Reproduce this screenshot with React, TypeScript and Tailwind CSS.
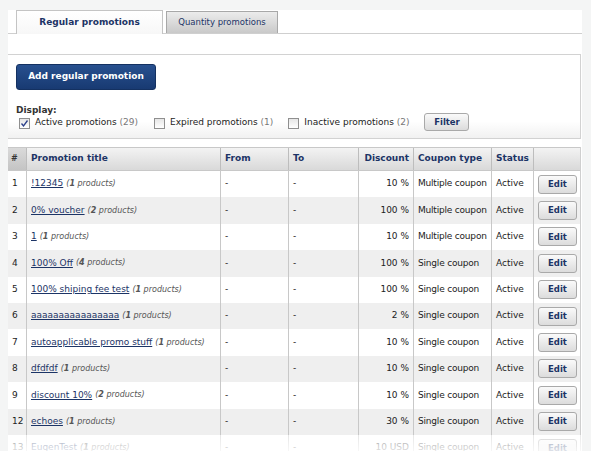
import React from "react";

const rows = [
  { n: "1", t: "!12345", p: "1", d: "10 %", c: "Multiple coupon" },
  { n: "2", t: "0% voucher", p: "2", d: "100 %", c: "Multiple coupon" },
  { n: "3", t: "1", p: "1", d: "10 %", c: "Multiple coupon" },
  { n: "4", t: "100% Off", p: "4", d: "100 %", c: "Single coupon" },
  { n: "5", t: "100% shiping fee test", p: "1", d: "100 %", c: "Single coupon" },
  { n: "6", t: "aaaaaaaaaaaaaaaa", p: "1", d: "2 %", c: "Single coupon" },
  { n: "7", t: "autoapplicable promo stuff", p: "1", d: "10 %", c: "Single coupon" },
  { n: "8", t: "dfdfdf", p: "1", d: "10 %", c: "Single coupon" },
  { n: "9", t: "discount 10%", p: "2", d: "10 %", c: "Single coupon" },
  { n: "12", t: "echoes", p: "1", d: "30 %", c: "Single coupon" },
  { n: "13", t: "EugenTest", p: "1", d: "10 USD", c: "Single coupon" },
];

function Check({ checked }: { checked?: boolean }) {
  return (
    <span className="inline-flex w-[11px] h-[11px] border border-[#8f8f8f] bg-gradient-to-b from-[#e6e6e6] to-[#ffffff] items-center justify-center mr-[5px]">
      {checked && (
        <svg width="9" height="9" viewBox="0 0 9 9">
          <path d="M1.5 4.5 L3.5 7 L7.5 1.5" fill="none" stroke="#2a3f8a" strokeWidth="1.3" />
        </svg>
      )}
    </span>
  );
}

export default function App() {
  const cols = "grid grid-cols-[19px_194px_68px_70px_55px_78px_42px_47px]";
  return (
    <div className="min-h-screen bg-[#f4f5f5] pt-[10px] pl-[8px] pr-[9px] text-[9px] text-[#222]" style={{ fontFamily: '"DejaVu Sans", Verdana, sans-serif' }}>
      <div className="bg-white relative h-[441px] overflow-hidden">
        {/* tabs */}
        <div className="flex items-end h-[24px] pl-[8px] border-b border-[#cfcfcf]">
          <div className="w-[147px] h-[24px] -mb-px border border-b-0 border-[#c4c4c4] bg-gradient-to-b from-white to-[#f7f7f7] flex items-center justify-center font-bold text-[#1c3466] text-[9px] pt-[1px]">
            Regular promotions
          </div>
          <div className="ml-[3px] w-[112px] h-[22px] border border-b-0 border-[#a8a8a8] bg-gradient-to-b from-[#ececec] to-[#c9c9c9] flex items-center justify-center text-[#1c3466] text-[8.5px]">
            Quantity promotions
          </div>
        </div>
        <div className="h-[20px]" />
        {/* filter box */}
        <div className="border border-l-0 border-[#d2d2d2] h-[85px] mr-[1px] bg-gradient-to-b from-white from-80% to-[#f1f1f1] pl-[8px] pt-[9px]">
          <button className="w-[140px] h-[26px] rounded-[3px] bg-gradient-to-b from-[#28508f] to-[#183a72] border border-[#143161] text-white font-bold text-[9px] flex items-center justify-center">
            Add regular promotion
          </button>
          <div className="mt-[15px] font-bold text-[#333] text-[9px] leading-[11px]">Display:</div>
          <div className="flex items-center pl-[3px] h-[14px]">
            <Check checked />
            <span>Active promotions <span className="text-[#777]">(29)</span></span>
            <span className="ml-[16px]" />
            <Check />
            <span>Expired promotions <span className="text-[#777]">(1)</span></span>
            <span className="ml-[15px]" />
            <Check />
            <span>Inactive promotions <span className="text-[#777]">(2)</span></span>
            <button className="ml-[15px] w-[45px] h-[18px] -mt-[2px] rounded-[3px] border border-[#a9a9a9] bg-gradient-to-b from-[#fafafa] to-[#dcdcdc] text-[#1c3466] font-bold text-[8.5px] flex items-center justify-center">
              Filter
            </button>
          </div>
        </div>
        <div className="h-[8px]" />
        {/* table */}
        <div className="mr-[1px] border-r border-[#cfcfcf]">
          <div className={`${cols} h-[24px] border-t border-b border-[#c8c8c8] font-bold text-[#1c3466] bg-gradient-to-b from-[#f3f3f3] to-[#d9d9d9]`}>
            <div className="flex items-center pl-[3px] bg-gradient-to-b from-[#dadada] to-[#c4c4c4] text-[#333] border-r border-[#bdbdbd] text-[8px]">#</div>
            <div className="flex items-center pl-[4px] border-r border-[#bdbdbd]">Promotion title</div>
            <div className="flex items-center pl-[4px] border-r border-[#bdbdbd]">From</div>
            <div className="flex items-center pl-[4px] border-r border-[#bdbdbd]">To</div>
            <div className="flex items-center justify-end pr-[4px] border-r border-[#bdbdbd]">Discount</div>
            <div className="flex items-center pl-[4px] border-r border-[#bdbdbd]">Coupon type</div>
            <div className="flex items-center pl-[4px] border-r border-[#bdbdbd]">Status</div>
            <div />
          </div>
          {rows.map((r, i) => (
            <div key={r.n} className={`${cols} h-[26.4px] ${i % 2 === 1 ? "bg-[#efefef]" : "bg-white"}`}>
              <div className="flex items-center pl-[4px] border-r border-[#c8c8c8]">{r.n}</div>
              <div className="flex items-center pl-[4px] border-r border-[#c8c8c8] whitespace-nowrap">
                <span className="underline text-[#1c3466]">{r.t}</span>
                <span className="ml-[3px] italic text-[#555] text-[8px]">
                  (<b>{r.p}</b> products)
                </span>
              </div>
              <div className="flex items-center pl-[4px] border-r border-[#c8c8c8]">-</div>
              <div className="flex items-center pl-[4px] border-r border-[#c8c8c8]">-</div>
              <div className="flex items-center justify-end pr-[4px] border-r border-[#c8c8c8]">{r.d}</div>
              <div className="flex items-center pl-[4px] border-r border-[#c8c8c8] whitespace-nowrap tracking-[-0.2px]">{r.c}</div>
              <div className="flex items-center pl-[4px] border-r border-[#c8c8c8]">Active</div>
              <div className="flex items-center justify-center">
                <button className="w-[39px] h-[19px] rounded-[3px] border border-[#a9a9a9] bg-gradient-to-b from-[#fafafa] to-[#dcdcdc] text-[#1c3466] font-bold text-[8.5px] flex items-center justify-center">
                  Edit
                </button>
              </div>
            </div>
          ))}
        </div>
        <div className="absolute left-0 right-0 bottom-0 h-[16px] bg-gradient-to-b from-[rgba(255,255,255,0.55)] to-[rgba(255,255,255,0.85)] pointer-events-none" />
      </div>
    </div>
  );
}
